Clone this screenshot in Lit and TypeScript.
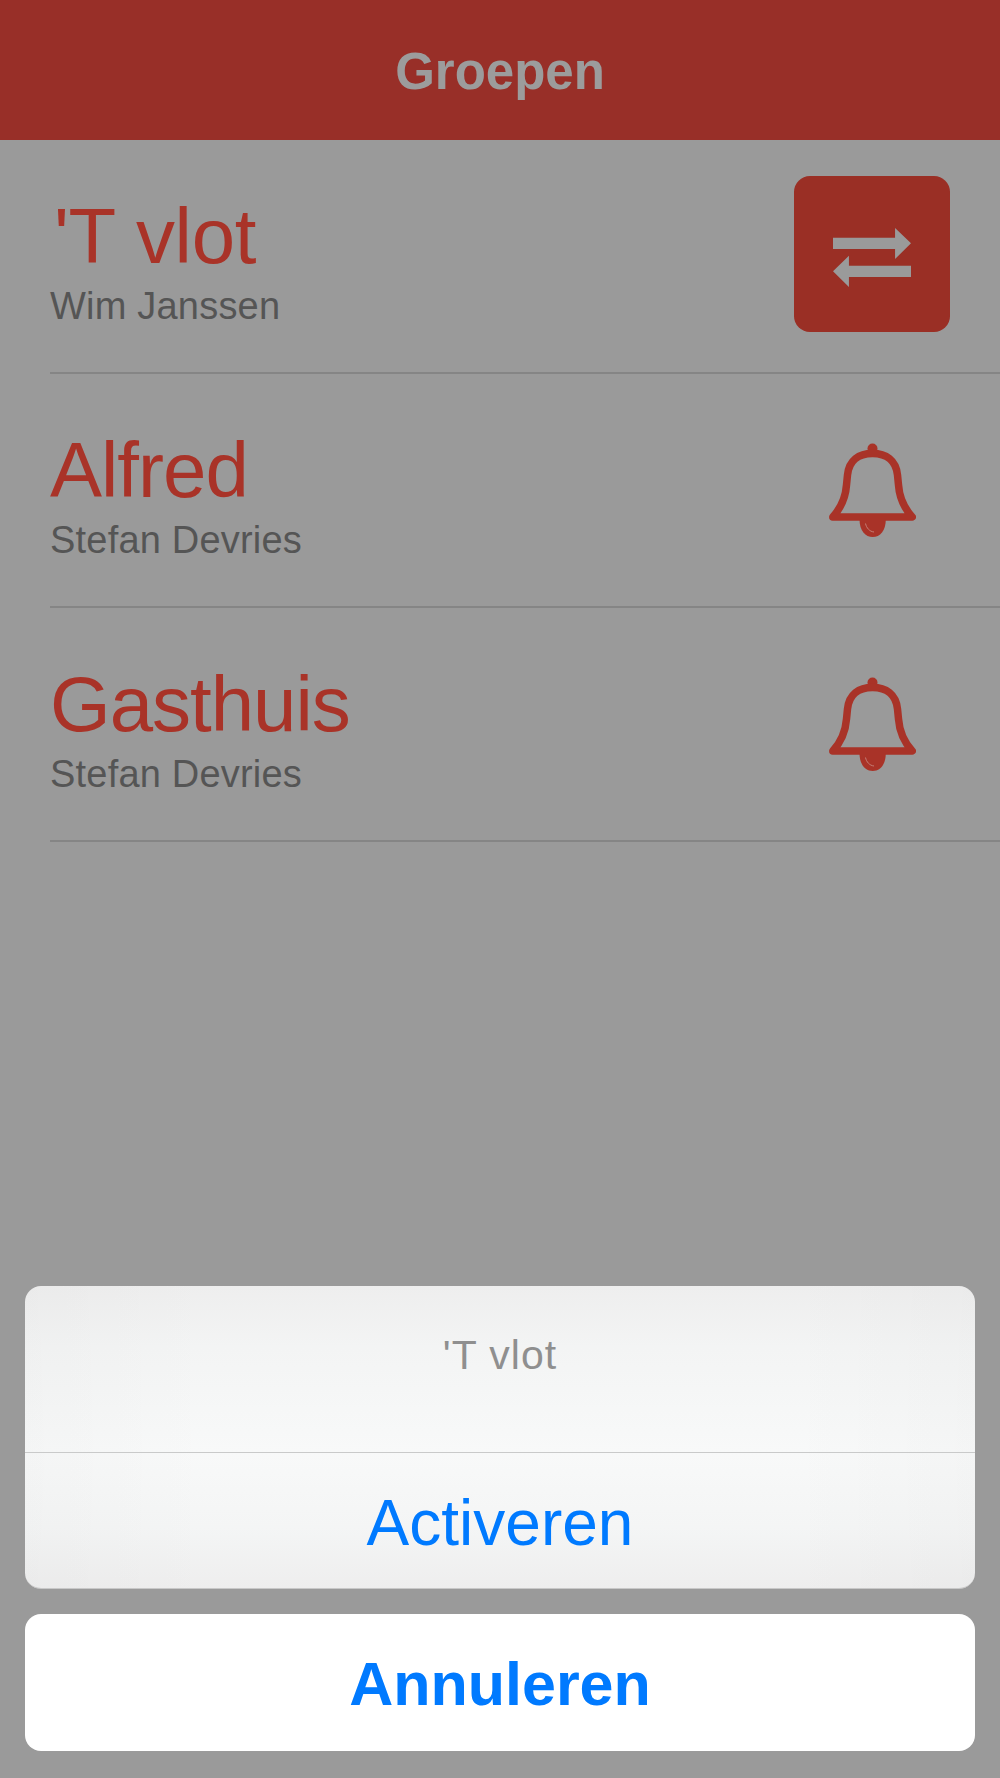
import { LitElement, html, css, svg } from 'lit';
import { customElement } from 'lit/decorators.js';

const groups = [
  { name: "'T vlot", owner: 'Wim Janssen', active: true },
  { name: 'Alfred', owner: 'Stefan Devries', active: false },
  { name: 'Gasthuis', owner: 'Stefan Devries', active: false },
];

const swapIcon = svg`
  <svg class="swap" viewBox="0 0 78.3 59" width="78" height="59">
    <path d="M0 9.7H62.3V0L78.3 15.3 62.3 31V21H0Z" />
    <path d="M78.3 37.7H16V27.7L0 43.3 16 59V49H78.3Z" />
  </svg>`;

const bellIcon = svg`
  <svg class="bell" viewBox="0 0 87 94" width="87" height="94">
    <circle class="fill" cx="43.5" cy="5.5" r="5" />
    <path class="outline" d="M3.8 74C11 66 16.5 56 17.5 42L18.5 32C20 17 30 10.5 43.5 10.5 57 10.5 67 17 68.5 32L69.5 42C70.5 56 76 66 83.2 74Z" />
    <path class="fill" d="M30.5 76H56.8C56.8 88 51 94 43.7 94 36.5 94 30.5 88 30.5 76Z" />
    <path class="shine" d="M36.5 80.5C37.5 85 40.5 88.5 45 89" />
  </svg>`;

@customElement('app-root')
export class AppRoot extends LitElement {
  static styles = css`
    :host {
      display: flex;
      flex-direction: column;
      min-height: 1778px;
      background: #9a9a9a;
      font-family: 'Liberation Sans', Arial, sans-serif;
    }
    .header {
      height: 140px;
      box-sizing: border-box;
      padding-top: 2px;
      display: flex;
      align-items: center;
      justify-content: center;
      background: #982f28;
      color: #9c9c9c;
      font-size: 51px;
      font-weight: 700;
    }
    .row {
      height: 234px;
      box-sizing: border-box;
      margin-left: 50px;
      padding-right: 50px;
      display: flex;
      justify-content: space-between;
      align-items: flex-start;
      border-bottom: 2px solid #858585;
    }
    .text {
      padding-top: 57px;
    }
    .name {
      font-size: 78px;
      line-height: 78px;
      letter-spacing: -1px;
      color: #a93328;
    }
    .name.first {
      margin-left: 4px;
      letter-spacing: -0.3px;
    }
    .owner {
      margin-top: 9px;
      font-size: 38px;
      line-height: 44px;
      letter-spacing: 0.2px;
      color: #555;
    }
    .action {
      width: 156px;
      height: 156px;
      margin-top: 36px;
      display: flex;
      align-items: center;
      justify-content: center;
    }
    .action.active {
      background: #9a2f25;
      border-radius: 16px;
    }
    .swap {
      margin-top: 7px;
    }
    .swap path {
      fill: #9a9a9a;
    }
    .bell {
      margin-top: 4px;
    }
    .bell .fill {
      fill: #a93328;
    }
    .bell .outline {
      fill: none;
      stroke: #a93328;
      stroke-width: 7.5;
      stroke-linejoin: round;
    }
    .bell .shine {
      fill: none;
      stroke: #c47e76;
      stroke-width: 1;
    }
    .sheet {
      margin-top: auto;
      padding: 0 25px 27px;
      display: flex;
      flex-direction: column;
      gap: 25px;
      text-align: center;
    }
    .options {
      border-radius: 16px;
      background:
        linear-gradient(90deg, rgba(0, 0, 0, 0.015), transparent 20%, transparent 80%, rgba(0, 0, 0, 0.015)),
        linear-gradient(#eeeeee, #f3f4f4 20%, #f8f9f9 55%, #f4f5f5 80%, #eeeeee);
      border-bottom: 1px solid #c8c8c8;
    }
    .title {
      height: 167px;
      box-sizing: border-box;
      padding-top: 45px;
      font-size: 41px;
      line-height: 48px;
      letter-spacing: 1px;
      color: #8f8f8f;
      border-bottom: 1px solid #c9caca;
    }
    .activate {
      height: 135px;
      box-sizing: border-box;
      padding-top: 33px;
      font-size: 64px;
      line-height: 74px;
      color: #007aff;
    }
    .cancel {
      height: 137px;
      box-sizing: border-box;
      padding-top: 35px;
      border-radius: 16px;
      background: #fff;
      font-size: 61px;
      font-weight: 700;
      line-height: 70px;
      color: #007aff;
    }
  `;

  render() {
    return html`
      <div class="header">Groepen</div>
      ${groups.map(
        (g) => html`
          <div class="row">
            <div class="text">
              <div class="name ${g.active ? 'first' : ''}">${g.name}</div>
              <div class="owner">${g.owner}</div>
            </div>
            <div class="action ${g.active ? 'active' : ''}">
              ${g.active ? swapIcon : bellIcon}
            </div>
          </div>
        `
      )}
      <div class="sheet">
        <div class="options">
          <div class="title">'T vlot</div>
          <div class="activate">Activeren</div>
        </div>
        <div class="cancel">Annuleren</div>
      </div>
    `;
  }
}
